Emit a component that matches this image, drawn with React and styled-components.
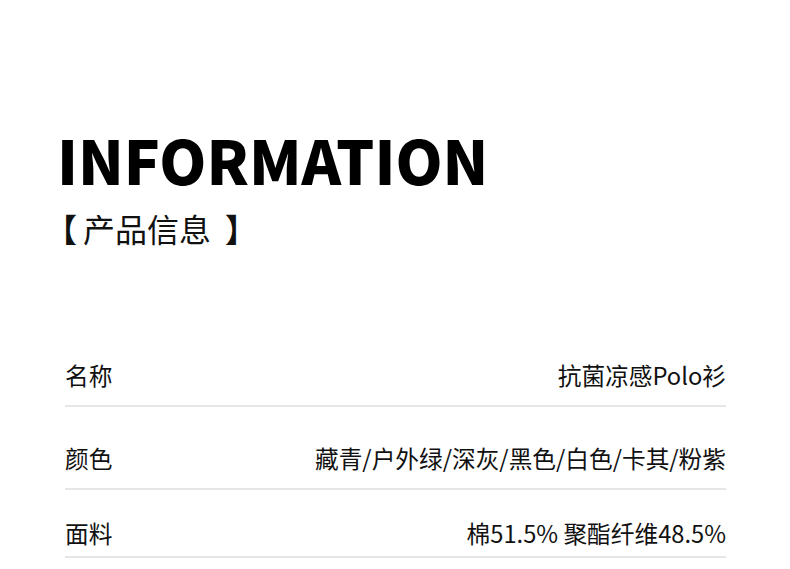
import { createGlobalStyle, styled } from "styled-components";

const GlobalStyle = createGlobalStyle`
  html, body {
    margin: 0;
    padding: 0;
    background: #fff;
  }
  body {
    font-family: "Noto Sans CJK SC", "Noto Sans", sans-serif;
  }
`;

export const Page = styled.div`
  width: 790px;
  height: 569px;
  overflow: hidden;
  background-color: #fff;
  padding-top: 129px;
  box-sizing: border-box;
`;

export const Header = styled.header`
  padding-left: 57px;
`;

export const Title = styled.h1`
  margin: 0;
  font-size: 60px;
  line-height: 1;
  font-weight: 900;
  color: #000;
`;

export const Subtitle = styled.h2`
  margin: 19px 0 0 -12px;
  font-size: 32px;
  line-height: 40px;
  font-weight: 400;
  color: #111;
`;

export const Bracket = styled.span`
  font-weight: 700;
  margin: 0 ${(p) => (p.$close ? 0 : 6)}px 0 ${(p) => (p.$close ? 14 : 0)}px;
`;

export const Table = styled.div`
  display: flex;
  flex-direction: column;
  margin: 112px 64px 0 65px;
`;

export const Row = styled.div`
  display: flex;
  justify-content: space-between;
  align-items: center;
  padding: ${(p) => p.$top}px 0 ${(p) => p.$bottom}px;
  border-bottom: 2px solid #e6e6e6;
  font-size: 23.7px;
  line-height: 30px;
  color: #111;
`;

export const Label = styled.span``;

export const Value = styled.span`
  text-align: right;
`;

const rows = [
  { label: "名称", value: "抗菌凉感Polo衫", top: 0, bottom: 15 },
  { label: "颜色", value: "藏青/户外绿/深灰/黑色/白色/卡其/粉紫", top: 36, bottom: 15 },
  { label: "面料", value: "棉51.5% 聚酯纤维48.5%", top: 28, bottom: 8 },
];

export default function App() {
  return (
    <Page>
      <GlobalStyle />
      <Header>
        <Title>INFORMATION</Title>
        <Subtitle>
          <Bracket>【</Bracket>产品信息<Bracket $close>】</Bracket>
        </Subtitle>
      </Header>
      <Table>
        {rows.map((r) => (
          <Row key={r.label} $top={r.top} $bottom={r.bottom}>
            <Label>{r.label}</Label>
            <Value>{r.value}</Value>
          </Row>
        ))}
      </Table>
    </Page>
  );
}
